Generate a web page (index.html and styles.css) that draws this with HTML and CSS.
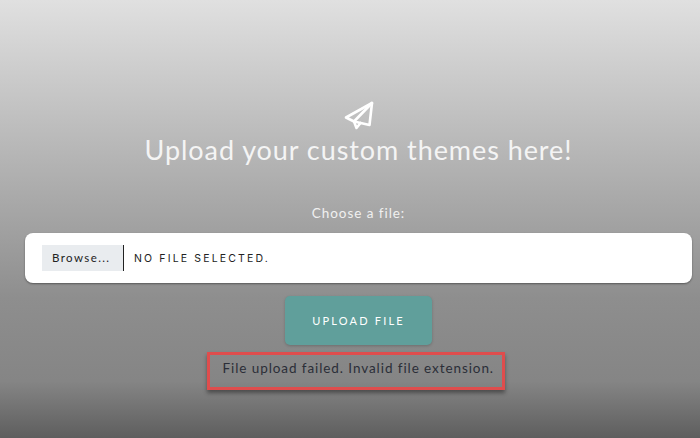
FILE: index.html
```html
<!DOCTYPE html>
<html lang="en">
<head>
  <meta charset="UTF-8" />
  <title>Upload Themes</title>
  <link rel="stylesheet" href="styles.css">
</head>
<body>
  <div class="upload-container">
    <svg class="plane-icon" width="30" height="30" viewBox="0 0 30 30" fill="none" stroke="#fff" stroke-width="2.6" stroke-linejoin="round" stroke-linecap="round">
      <path d="M28 2 L2 16.5 L10 20.5 L25.5 24 Z" />
      <path d="M28 2 L10 20.5 L12.5 27 L16.5 22" />
    </svg>
    <h1>Upload your custom themes here!</h1>
    <form class="upload-form">
      <label class="file-label" for="theme_file">Choose a file:</label>
      <div class="file-input">
        <span class="browse-button">Browse...</span>
        <span class="file-name">NO FILE SELECTED.</span>
      </div>
      <button type="button" class="submit-button">UPLOAD FILE</button>
    </form>
    <div class="error-box">File upload failed. Invalid file extension.</div>
  </div>
</body>
</html>
```

FILE: styles.css
```css
html, body {
  height: 100%;
}
body {
  margin: 0;
  overflow: hidden;
  font-family: 'Lato', 'Open Sans', sans-serif;
  background: linear-gradient(180deg, #e0e0e0 0%, #8e8e8e 68%, #858585 87%, #5e5e5e 100%);
}
.upload-container {
  display: flex;
  flex-direction: column;
  align-items: center;
  padding: 101px 8px 0 25px;
}
.plane-icon {
  display: block;
}
h1 {
  margin: 1px 0 0;
  font-size: 27px;
  line-height: 36px;
  font-weight: 400;
  letter-spacing: 0.93px;
  color: #f4f4f4;
}
.upload-form {
  display: flex;
  flex-direction: column;
  align-items: center;
  width: 100%;
  margin-top: 35px;
}
.file-label {
  font-size: 13.5px;
  line-height: 20px;
  letter-spacing: 0.95px;
  color: #f0f0f0;
}
.file-input {
  display: flex;
  align-items: center;
  align-self: stretch;
  box-sizing: border-box;
  height: 50px;
  margin-top: 10px;
  padding-left: 17px;
  background: #fff;
  border-radius: 8px;
  box-shadow: 0 1px 2px rgba(0, 0, 0, 0.4);
}
.browse-button {
  box-sizing: border-box;
  width: 82px;
  height: 26px;
  padding-left: 10px;
  font-size: 11.5px;
  line-height: 26px;
  letter-spacing: 1.4px;
  color: #222;
  background: #e9ecef;
  border-right: 1px solid #222;
}
.file-name {
  margin-left: 10px;
  font-family: 'Inter', sans-serif;
  font-size: 10.5px;
  letter-spacing: 2.15px;
  color: #222;
}
.submit-button {
  width: 147px;
  height: 49px;
  margin-top: 13px;
  padding: 0;
  font-family: inherit;
  font-size: 11px;
  letter-spacing: 2.2px;
  color: #fff;
  background: #609f9b;
  border: none;
  border-radius: 5px;
  box-shadow: 0 1px 3px rgba(0, 0, 0, 0.2);
}
.error-box {
  box-sizing: border-box;
  width: 298px;
  height: 38px;
  margin-top: 7px;
  margin-right: 6px;
  padding-left: 13px;
  font-size: 13.5px;
  line-height: 27px;
  letter-spacing: 0.92px;
  white-space: nowrap;
  color: #2b2e38;
  border: 3px solid #df4d4d;
  box-shadow: 0 3px 4px rgba(0, 0, 0, 0.4);
}
```
